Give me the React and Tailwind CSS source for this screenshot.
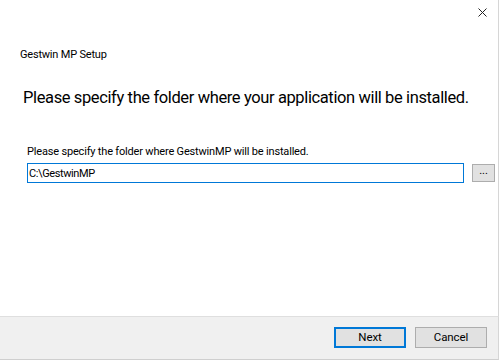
import React from 'react';

export default function App() {
  return (
    <div className="w-[500px] h-[360px] bg-white flex flex-col text-black" style={{ fontFamily: 'Roboto, "Noto Sans", sans-serif' }}>
      <div className="flex-1 flex flex-col border-r border-[#d6d6d6] mr-px">
        {/* close button */}
        <div className="flex justify-end h-[26px] pr-[11px] pt-[8px]">
          <svg width="9" height="9" viewBox="0 0 9 9" className="text-[#222]">
            <path d="M0.5 0.5 L8.5 8.5 M8.5 0.5 L0.5 8.5" stroke="currentColor" strokeWidth="1" />
          </svg>
        </div>

        <div className="pl-[20px] pt-[21px] text-[11px] leading-[16px] tracking-[-0.2px]">Gestwin MP Setup</div>

        <h1 className="pl-[23px] pt-[23px] text-[16.5px] leading-[24px] font-normal whitespace-nowrap tracking-[-0.38px]">
          Please specify the folder where your application will be installed.
        </h1>

        <div className="pl-[27px] pt-[34px] text-[11px] leading-[15px] tracking-[-0.18px]">
          Please specify the folder where GestwinMP will be installed.
        </div>

        <div className="flex items-center pl-[27px] pt-[4px] gap-[8px]">
          <input
            readOnly
            value="C:\GestwinMP"
            className="w-[437px] h-[20px] border border-[#0078d7] px-[1px] text-[11px] tracking-[-0.4px] outline-none"
          />
          <button className="w-[23px] h-[18px] bg-[#e1e1e1] border border-[#adadad] text-[11px] leading-[10px] pb-[4px]">
            ...
          </button>
        </div>
      </div>

      {/* footer */}
      <div className="h-[44px] bg-[#f0f0f0] border-t border-[#dfdfdf] border-b border-b-[#cfcfcf] border-r border-r-[#d6d6d6] mr-px flex items-center justify-end gap-[9px] pr-[11px] pb-px">
        <button className="w-[72px] h-[21px] bg-[#e1e1e1] border-2 border-[#0078d7] text-[11.5px] tracking-[-0.1px]">Next</button>
        <button className="w-[72px] h-[21px] bg-[#e1e1e1] border border-[#adadad] text-[11.5px] tracking-[-0.1px]">Cancel</button>
      </div>
    </div>
  );
}
